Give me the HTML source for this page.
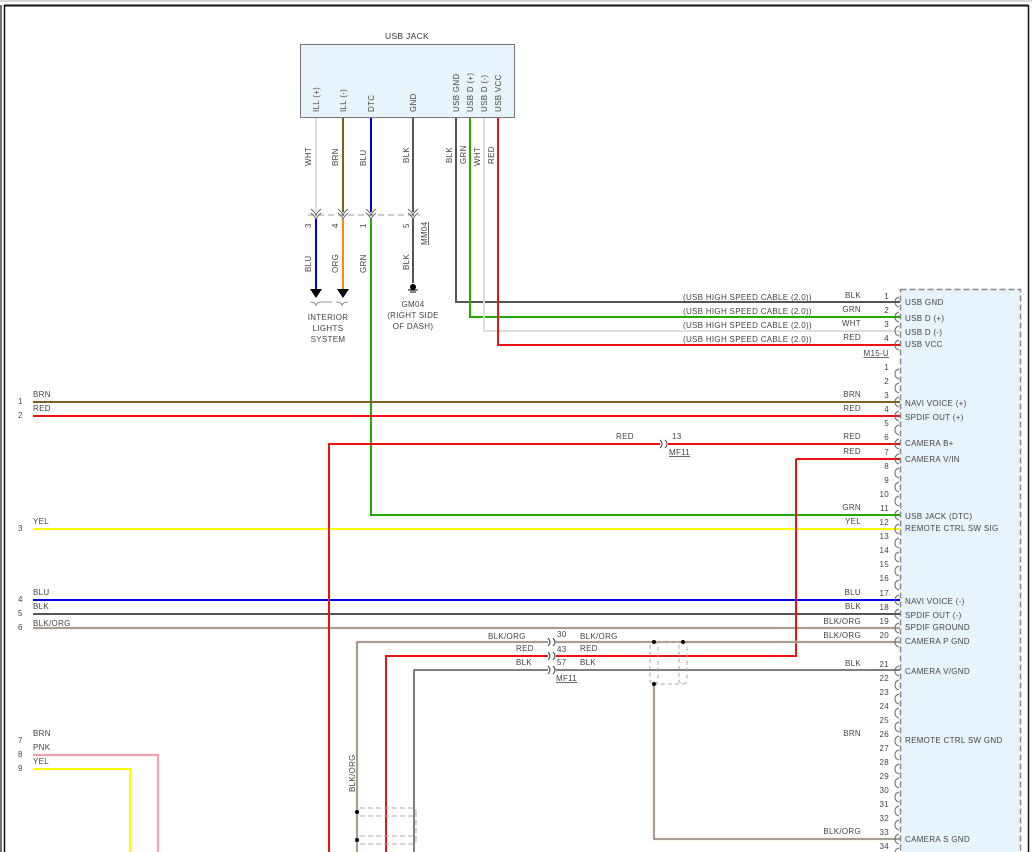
<!DOCTYPE html>
<html><head><meta charset="utf-8"><style>
html,body{margin:0;padding:0;background:#fff;width:1032px;height:852px;overflow:hidden}
svg{display:block;font-family:"Liberation Sans",sans-serif}
text{font-size:8px;fill:#444;letter-spacing:0.3px}
.n{text-anchor:end}
.s{font-size:8.5px;fill:#333}
</style></head><body>
<svg width="1032" height="852" viewBox="0 0 1032 852" xmlns="http://www.w3.org/2000/svg">
<line x1="0" y1="1" x2="1032" y2="1" stroke="#ccc" stroke-width="1.5"/>
<line x1="4" y1="5.5" x2="1028.5" y2="5.5" stroke="#111" stroke-width="2"/>
<line x1="1" y1="5" x2="1" y2="852" stroke="#111" stroke-width="1.2"/>
<line x1="4.5" y1="5" x2="4.5" y2="852" stroke="#111" stroke-width="1.5"/>
<line x1="1028.5" y1="5" x2="1028.5" y2="852" stroke="#111" stroke-width="1.5"/>

<text x="407" y="39" text-anchor="middle" class="s">USB JACK</text>
<rect x="300.5" y="44.5" width="214" height="73" fill="#e8f4fb" stroke="#777"/>
<g class="s">
<text transform="translate(319,112) rotate(-90)">ILL (+)</text>
<text transform="translate(346,112) rotate(-90)">ILL (-)</text>
<text transform="translate(374,112) rotate(-90)">DTC</text>
<text transform="translate(416,112) rotate(-90)">GND</text>
<text transform="translate(459,112) rotate(-90)">USB GND</text>
<text transform="translate(473,112) rotate(-90)">USB D (+)</text>
<text transform="translate(487,112) rotate(-90)">USB D (-)</text>
<text transform="translate(501,112) rotate(-90)">USB VCC</text>
</g>

<rect x="900.5" y="289.5" width="120" height="570" fill="#e8f4fb" stroke="#888" stroke-dasharray="6,3" stroke-width="1.5"/>

<line x1="316" y1="118" x2="316" y2="212" stroke="#ddd" stroke-width="2"/>
<line x1="343" y1="118" x2="343" y2="212" stroke="#806020" stroke-width="2"/>
<line x1="371" y1="118" x2="371" y2="212" stroke="#0000ee" stroke-width="2"/>
<line x1="413" y1="118" x2="413" y2="212" stroke="#555" stroke-width="2"/>
<line x1="308" y1="215" x2="420" y2="215" stroke="#999" stroke-dasharray="6,4"/>
<g fill="none" stroke="#666" stroke-width="1">
<path d="M311,209 q5,4 5,7 q0,-3 5,-7 M311,213 q5,4 5,7 q0,-3 5,-7"/>
<path d="M338,209 q5,4 5,7 q0,-3 5,-7 M338,213 q5,4 5,7 q0,-3 5,-7"/>
<path d="M366,209 q5,4 5,7 q0,-3 5,-7 M366,213 q5,4 5,7 q0,-3 5,-7"/>
<path d="M408,209 q5,4 5,7 q0,-3 5,-7 M408,213 q5,4 5,7 q0,-3 5,-7"/>
</g>
<line x1="316" y1="219" x2="316" y2="290" stroke="#0000ee" stroke-width="2"/>
<line x1="343" y1="219" x2="343" y2="290" stroke="#ff8c00" stroke-width="2"/>
<line x1="413" y1="219" x2="413" y2="283" stroke="#555" stroke-width="2"/>
<polygon points="310,289 322,289 316,298" fill="#000"/>
<polygon points="337,289 349,289 343,298" fill="#000"/>
<path d="M310,302 q6,0 6,4 q0,-4 6,-4 M336,302 q6,0 6,4 q0,-4 6,-4 M322,302 q4,0 10,0" fill="none" stroke="#777" stroke-width="0.8"/>
<circle cx="413" cy="287" r="3" fill="#000"/>
<line x1="408" y1="290" x2="418" y2="290" stroke="#000"/><line x1="410" y1="292" x2="416" y2="292" stroke="#000"/>
<g class="s" text-anchor="middle">
<text x="328" y="320">INTERIOR</text><text x="328" y="331">LIGHTS</text><text x="328" y="342">SYSTEM</text>
<text x="413" y="307">GM04</text><text x="413" y="318">(RIGHT SIDE</text><text x="413" y="329">OF DASH)</text>
</g>
<g>
<text transform="translate(311,166) rotate(-90)">WHT</text>
<text transform="translate(338,166) rotate(-90)">BRN</text>
<text transform="translate(366,166) rotate(-90)">BLU</text>
<text transform="translate(409,163) rotate(-90)">BLK</text>
<text transform="translate(452,163) rotate(-90)">BLK</text>
<text transform="translate(466,164) rotate(-90)">GRN</text>
<text transform="translate(480,166) rotate(-90)">WHT</text>
<text transform="translate(494,164) rotate(-90)">RED</text>
<text transform="translate(311,228) rotate(-90)">3</text>
<text transform="translate(338,228) rotate(-90)">4</text>
<text transform="translate(366,228) rotate(-90)">1</text>
<text transform="translate(409,228) rotate(-90)">5</text>
<text transform="translate(427,245) rotate(-90)" text-decoration="underline">MM04</text>
<text transform="translate(311,272) rotate(-90)">BLU</text>
<text transform="translate(338,273) rotate(-90)">ORG</text>
<text transform="translate(366,273) rotate(-90)">GRN</text>
<text transform="translate(409,270) rotate(-90)">BLK</text>
</g>

<polyline points="456,118 456,302 900,302" fill="none" stroke="#555" stroke-width="2"/>
<polyline points="470,118 470,317 900,317" fill="none" stroke="#22aa00" stroke-width="2"/>
<polyline points="484,118 484,331 900,331" fill="none" stroke="#ddd" stroke-width="2"/>
<polyline points="498,118 498,345 900,345" fill="none" stroke="#ee1111" stroke-width="2"/>
<g>
<text x="683" y="300">(USB HIGH SPEED CABLE (2.0))</text>
<text x="683" y="314">(USB HIGH SPEED CABLE (2.0))</text>
<text x="683" y="328">(USB HIGH SPEED CABLE (2.0))</text>
<text x="683" y="342">(USB HIGH SPEED CABLE (2.0))</text>
<text x="861" y="298" class="n">BLK</text><text x="861" y="312" class="n">GRN</text><text x="861" y="326" class="n">WHT</text><text x="861" y="340" class="n">RED</text>
<text x="889" y="299" class="n">1</text><text x="889" y="313" class="n">2</text><text x="889" y="327" class="n">3</text><text x="889" y="341" class="n">4</text>
<text x="889" y="356" class="n" text-decoration="underline">M15-U</text>
</g>

<polyline points="371,219 371,515 900,515" fill="none" stroke="#22aa00" stroke-width="2"/>

<line x1="33" y1="402" x2="900" y2="402" stroke="#806020" stroke-width="2"/>
<line x1="33" y1="416" x2="900" y2="416" stroke="#ee1111" stroke-width="2"/>
<line x1="33" y1="529" x2="900" y2="529" stroke="#ffff00" stroke-width="2"/>
<line x1="33" y1="600" x2="900" y2="600" stroke="#0000ee" stroke-width="2"/>
<line x1="33" y1="614" x2="900" y2="614" stroke="#555" stroke-width="2"/>
<line x1="33" y1="628" x2="900" y2="628" stroke="#f6d8bd" stroke-width="2.6"/>
<line x1="33" y1="628" x2="900" y2="628" stroke="#8a8a8a" stroke-width="1.5"/>
<polyline points="33,755 158,755 158,852" fill="none" stroke="#f5a0b0" stroke-width="2.2"/>
<polyline points="33,769 130,769 130,852" fill="none" stroke="#ffff00" stroke-width="2"/>

<polyline points="329,852 329,444 660,444" fill="none" stroke="#ee1111" stroke-width="2"/>
<line x1="668" y1="444" x2="900" y2="444" stroke="#ee1111" stroke-width="2"/>
<path d="M660,440 q4,4 0,8 M665,440 q4,4 0,8" fill="none" stroke="#444"/>
<polyline points="796,459 900,459" fill="none" stroke="#ee1111" stroke-width="2"/>
<polyline points="796,459 796,656 556,656" fill="none" stroke="#ee1111" stroke-width="2"/>
<polyline points="357,852 357,642 548,642" fill="none" stroke="#f6d8bd" stroke-width="2.6"/>
<polyline points="357,852 357,642 548,642" fill="none" stroke="#8a8a8a" stroke-width="1.5"/>
<line x1="556" y1="642" x2="900" y2="642" stroke="#f6d8bd" stroke-width="2.6"/>
<line x1="556" y1="642" x2="900" y2="642" stroke="#8a8a8a" stroke-width="1.5"/>
<polyline points="386,852 386,656 548,656" fill="none" stroke="#ee1111" stroke-width="2"/>
<polyline points="414,852 414,670 548,670" fill="none" stroke="#555" stroke-width="1.5"/>
<line x1="556" y1="670" x2="900" y2="670" stroke="#555" stroke-width="1.5"/>
<path d="M548,638 q4,4 0,8 M553,638 q4,4 0,8 M548,652 q4,4 0,8 M553,652 q4,4 0,8 M548,666 q4,4 0,8 M553,666 q4,4 0,8" fill="none" stroke="#444"/>
<polyline points="654,684 654,839 900,839" fill="none" stroke="#f6d8bd" stroke-width="2.6"/>
<polyline points="654,684 654,839 900,839" fill="none" stroke="#8a8a8a" stroke-width="1.5"/>
<rect x="650" y="642" width="8" height="42" rx="4" fill="none" stroke="#aaa" stroke-dasharray="4,3"/>
<rect x="679" y="642" width="8" height="42" rx="4" fill="none" stroke="#aaa" stroke-dasharray="4,3"/>
<line x1="654" y1="642" x2="683" y2="642" stroke="#aaa" stroke-dasharray="4,3"/>
<line x1="654" y1="684" x2="683" y2="684" stroke="#aaa" stroke-dasharray="4,3"/>
<circle cx="654" cy="642" r="2" fill="#000"/><circle cx="683" cy="642" r="2" fill="#000"/><circle cx="654" cy="684" r="2" fill="#000"/>
<g fill="none" stroke="#aaa" stroke-dasharray="5,3">
<rect x="357" y="808" width="59" height="8" rx="3"/>
<rect x="357" y="836" width="59" height="8" rx="3"/>
<line x1="416" y1="812" x2="416" y2="840"/>
</g>
<circle cx="357" cy="812" r="2" fill="#000"/><circle cx="357" cy="840" r="2" fill="#000"/>

<g>
<text x="616" y="439">RED</text><text x="672" y="439">13</text>
<text x="669" y="455" text-decoration="underline">MF11</text>
<text x="488" y="639">BLK/ORG</text><text x="557" y="637">30</text><text x="580" y="639">BLK/ORG</text>
<text x="516" y="651">RED</text><text x="557" y="652">43</text><text x="580" y="651">RED</text>
<text x="516" y="665">BLK</text><text x="557" y="665">57</text><text x="580" y="665">BLK</text>
<text x="556" y="681" text-decoration="underline">MF11</text>
<text transform="translate(355,792) rotate(-90)">BLK/ORG</text>
</g>

<g>
<text x="33" y="397">BRN</text><text x="33" y="411">RED</text><text x="33" y="524">YEL</text>
<text x="33" y="595">BLU</text><text x="33" y="609">BLK</text><text x="33" y="626">BLK/ORG</text>
<text x="33" y="736">BRN</text><text x="33" y="750">PNK</text><text x="33" y="764">YEL</text>
<text x="18" y="404">1</text><text x="18" y="418">2</text><text x="18" y="531">3</text>
<text x="18" y="602">4</text><text x="18" y="616">5</text><text x="18" y="630">6</text>
<text x="18" y="743">7</text><text x="18" y="757">8</text><text x="18" y="771">9</text>
</g>

<g class="n">
<text x="861" y="397" class="n">BRN</text><text x="861" y="411" class="n">RED</text>
<text x="861" y="439" class="n">RED</text><text x="861" y="454" class="n">RED</text>
<text x="861" y="510" class="n">GRN</text><text x="861" y="524" class="n">YEL</text>
<text x="861" y="595" class="n">BLU</text><text x="861" y="609" class="n">BLK</text>
<text x="861" y="624" class="n">BLK/ORG</text><text x="861" y="638" class="n">BLK/ORG</text>
<text x="861" y="666" class="n">BLK</text><text x="861" y="736" class="n">BRN</text>
<text x="861" y="834" class="n">BLK/ORG</text>
</g>

<g>
<text x="889" y="370" class="n">1</text><text x="889" y="384" class="n">2</text><text x="889" y="398" class="n">3</text><text x="889" y="412" class="n">4</text>
<text x="889" y="426" class="n">5</text><text x="889" y="440" class="n">6</text><text x="889" y="455" class="n">7</text><text x="889" y="469" class="n">8</text>
<text x="889" y="483" class="n">9</text><text x="889" y="497" class="n">10</text><text x="889" y="511" class="n">11</text><text x="889" y="525" class="n">12</text>
<text x="889" y="539" class="n">13</text><text x="889" y="553" class="n">14</text><text x="889" y="567" class="n">15</text><text x="889" y="581" class="n">16</text>
<text x="889" y="596" class="n">17</text><text x="889" y="610" class="n">18</text><text x="889" y="624" class="n">19</text><text x="889" y="638" class="n">20</text>
<text x="889" y="667" class="n">21</text><text x="889" y="681" class="n">22</text><text x="889" y="695" class="n">23</text><text x="889" y="709" class="n">24</text>
<text x="889" y="723" class="n">25</text><text x="889" y="737" class="n">26</text><text x="889" y="751" class="n">27</text><text x="889" y="765" class="n">28</text>
<text x="889" y="779" class="n">29</text><text x="889" y="793" class="n">30</text><text x="889" y="807" class="n">31</text><text x="889" y="821" class="n">32</text>
<text x="889" y="835" class="n">33</text><text x="889" y="849" class="n">34</text>
</g>

<g fill="none" stroke="#666" stroke-width="1">
<path d="M899,297 q-4,1 -4,5 q0,4 4,5 M899,312 q-4,1 -4,5 q0,4 4,5 M899,326 q-4,1 -4,5 q0,4 4,5 M899,340 q-4,1 -4,5 q0,4 4,5
M899,369 q-4,1 -4,5 q0,4 4,5 M899,383 q-4,1 -4,5 q0,4 4,5 M899,397 q-4,1 -4,5 q0,4 4,5 M899,411 q-4,1 -4,5 q0,4 4,5
M899,425 q-4,1 -4,5 q0,4 4,5 M899,439 q-4,1 -4,5 q0,4 4,5 M899,454 q-4,1 -4,5 q0,4 4,5 M899,468 q-4,1 -4,5 q0,4 4,5
M899,482 q-4,1 -4,5 q0,4 4,5 M899,496 q-4,1 -4,5 q0,4 4,5 M899,510 q-4,1 -4,5 q0,4 4,5 M899,524 q-4,1 -4,5 q0,4 4,5
M899,538 q-4,1 -4,5 q0,4 4,5 M899,552 q-4,1 -4,5 q0,4 4,5 M899,566 q-4,1 -4,5 q0,4 4,5 M899,580 q-4,1 -4,5 q0,4 4,5
M899,595 q-4,1 -4,5 q0,4 4,5 M899,609 q-4,1 -4,5 q0,4 4,5 M899,623 q-4,1 -4,5 q0,4 4,5 M899,637 q-4,1 -4,5 q0,4 4,5
M899,666 q-4,1 -4,5 q0,4 4,5 M899,680 q-4,1 -4,5 q0,4 4,5 M899,694 q-4,1 -4,5 q0,4 4,5 M899,708 q-4,1 -4,5 q0,4 4,5
M899,722 q-4,1 -4,5 q0,4 4,5 M899,736 q-4,1 -4,5 q0,4 4,5 M899,750 q-4,1 -4,5 q0,4 4,5 M899,764 q-4,1 -4,5 q0,4 4,5
M899,778 q-4,1 -4,5 q0,4 4,5 M899,792 q-4,1 -4,5 q0,4 4,5 M899,806 q-4,1 -4,5 q0,4 4,5 M899,820 q-4,1 -4,5 q0,4 4,5
M899,834 q-4,1 -4,5 q0,4 4,5 M899,848 q-4,1 -4,5 q0,4 4,5"/>
</g>

<g class="s">
<text x="905" y="305">USB GND</text>
<text x="905" y="321">USB D (+)</text>
<text x="905" y="335">USB D (-)</text>
<text x="905" y="347">USB VCC</text>
<text x="905" y="406">NAVI VOICE (+)</text>
<text x="905" y="420">SPDIF OUT (+)</text>
<text x="905" y="446">CAMERA B+</text>
<text x="905" y="462">CAMERA V/IN</text>
<text x="905" y="519">USB JACK (DTC)</text>
<text x="905" y="531">REMOTE CTRL SW SIG</text>
<text x="905" y="604">NAVI VOICE (-)</text>
<text x="905" y="618">SPDIF OUT (-)</text>
<text x="905" y="630">SPDIF GROUND</text>
<text x="905" y="644">CAMERA P GND</text>
<text x="905" y="674">CAMERA V/GND</text>
<text x="905" y="743">REMOTE CTRL SW GND</text>
<text x="905" y="842">CAMERA S GND</text>
</g>
</svg>
</body></html>
